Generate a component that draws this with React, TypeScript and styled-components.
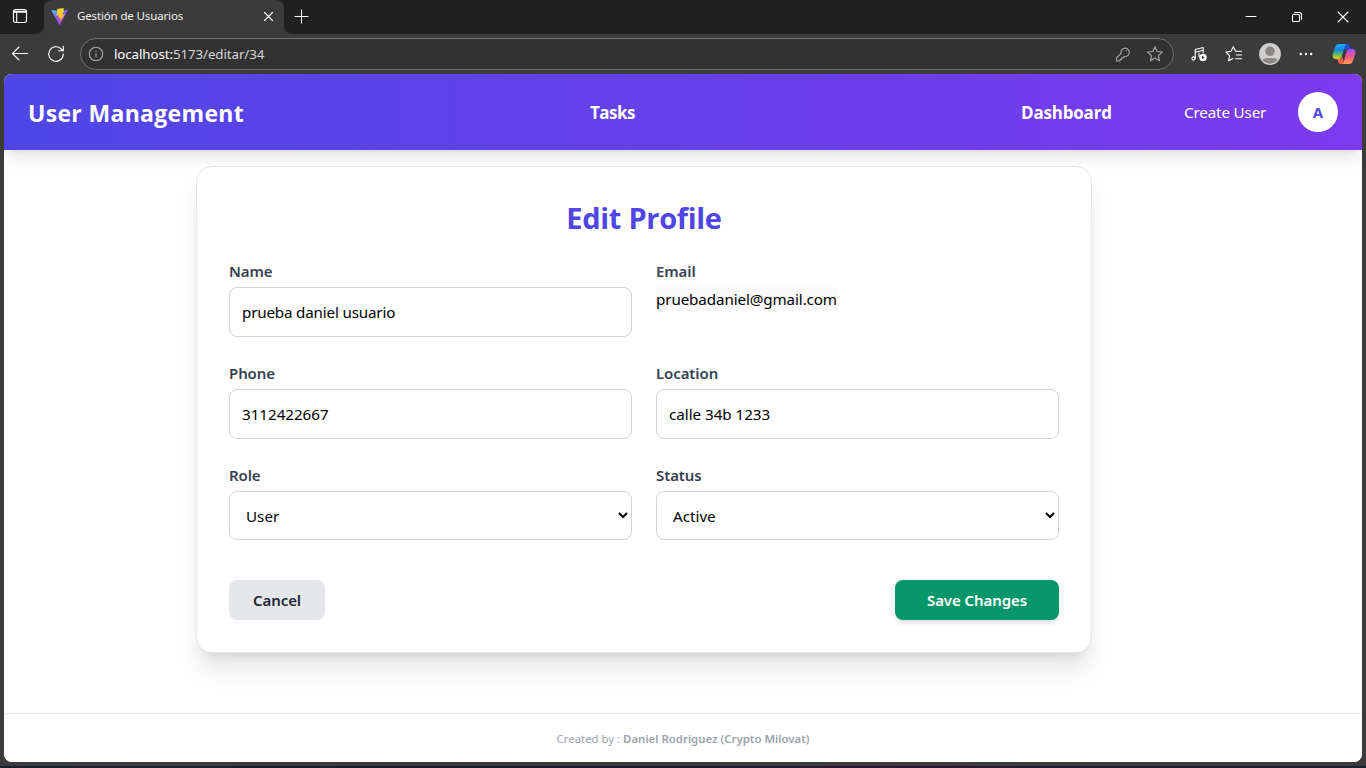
import React from "react";
import styled, { createGlobalStyle } from "styled-components";

const GlobalStyle = createGlobalStyle`
  *, *::before, *::after { box-sizing: border-box; }
  body { margin: 0; font-family: "Noto Sans", "Open Sans", sans-serif; background: #3b3b3b; }
  h1, h2, p { margin: 0; }
`;

const Window = styled.div`
  width: 1366px;
  height: 768px;
  display: flex;
  flex-direction: column;
  overflow: hidden;
  background: #3b3b3b;
`;

/* Browser chrome */
const TabStrip = styled.div`
  display: flex;
  flex: 0 0 34px;
  color: #fff;
`;
const StripStart = styled.div`
  display: flex;
  align-items: center;
  width: 44px;
  padding: 0 0 2px 12px;
  background: #202020;
  border-bottom-right-radius: 8px;
`;
const TabSlot = styled.div`
  display: flex;
  width: 240px;
  background: linear-gradient(#202020 50%, #3b3b3b 50%);
`;
const Tab = styled.div`
  display: flex;
  align-items: center;
  flex: 1;
  padding: 0 10px 2px 7px;
  background: #3b3b3b;
  border-radius: 8px 8px 0 0;
`;
const TabTitle = styled.span`
  flex: 1;
  margin-left: 9px;
  font-size: 11.5px;
  line-height: 16px;
  letter-spacing: -0.14px;
  color: #f2f2f2;
`;
const StripEnd = styled.div`
  display: flex;
  align-items: center;
  justify-content: space-between;
  flex: 1;
  padding: 0 17px 2px 10px;
  background: #202020;
  border-bottom-left-radius: 8px;
`;
const WindowControls = styled.div`
  display: flex;
  align-items: center;
  gap: 34px;
  padding-top: 2px;
`;
const Toolbar = styled.div`
  display: flex;
  align-items: center;
  flex: 0 0 40px;
  padding: 0 8px 0 10px;
  color: #fff;
`;
const NavIcons = styled.div`
  display: flex;
  align-items: center;
  gap: 16px;
  width: 70px;
`;
const AddressBar = styled.div`
  display: flex;
  align-items: center;
  flex: none;
  width: 1094px;
  height: 32px;
  padding: 0 9px 0 7px;
  border: 1px solid #6d6d6d;
  border-radius: 16px;
  background: #323232;
  color: #a8a8a8;
`;
const Url = styled.span`
  flex: 1;
  margin-left: 10px;
  font-size: 13.3px;
  letter-spacing: -0.08px;
  line-height: 20px;
  color: #d6d6d6;
`;
const Host = styled.span`
  color: #fff;
`;
const AddressIcons = styled.div`
  display: flex;
  align-items: center;
  gap: 13px;
`;
const ToolbarIcons = styled.div`
  display: grid;
  grid-template-columns: 22px 48px 24px 48px 28px;
  align-items: center;
  justify-items: center;
  margin-left: 14px;
`;
const Icon = styled.svg`
  display: block;
  flex: none;
  fill: none;
  stroke: currentColor;
  stroke-width: 1.1;
  stroke-linecap: round;
  stroke-linejoin: round;
`;

/* Page */
const Page = styled.div`
  display: flex;
  flex-direction: column;
  width: 1358px;
  height: 688px;
  margin-left: 4px;
  border-radius: 8px;
  overflow: hidden;
  background: #fefefe;
`;
const Header = styled.header`
  display: flex;
  align-items: center;
  flex: 0 0 76px;
  padding: 0 24px;
  color: #fff;
  white-space: nowrap;
  background: linear-gradient(to right, #4f46e5, #7c3aed);
  box-shadow: 0 10px 15px -3px rgba(0, 0, 0, 0.1), 0 4px 6px -4px rgba(0, 0, 0, 0.1);
`;
const Brand = styled.h1`
  width: 562px;
  padding-top: 2px;
  font-family: "Open Sans", sans-serif;
  font-size: 23px;
  line-height: 32px;
  font-weight: 700;
  letter-spacing: 0.32px;
`;
const NavLink = styled.a<{ $width: number; $tracking: number }>`
  width: ${(p) => p.$width}px;
  padding-top: 2px;
  font-family: "Open Sans", sans-serif;
  font-size: 17px;
  line-height: 28px;
  font-weight: 700;
  letter-spacing: ${(p) => p.$tracking}px;
`;
const CreateLink = styled.a`
  width: 114px;
  font-size: 15.2px;
  line-height: 24px;
  letter-spacing: -0.15px;
`;
const Avatar = styled.div`
  display: grid;
  place-items: center;
  width: 40px;
  height: 40px;
  border-radius: 50%;
  background: #fff;
  color: #4f46e5;
  font-size: 15px;
  font-weight: 700;
`;
const Main = styled.main`
  flex: 1;
  padding: 16px 0 0 192px;
`;
const Card = styled.section`
  width: 896px;
  height: 487px;
  padding: 32px;
  border: 1px solid #e5e7eb;
  border-radius: 16px;
  background: #fff;
  box-shadow: 0 20px 25px -5px rgba(0, 0, 0, 0.1), 0 8px 10px -6px rgba(0, 0, 0, 0.1);
`;
const Title = styled.h2`
  margin-bottom: 24px;
  font-family: "Open Sans", sans-serif;
  font-size: 29px;
  line-height: 37px;
  height: 36px;
  letter-spacing: -0.3px;
  text-align: center;
  color: #4f46e5;
`;
const FormGrid = styled.div`
  display: grid;
  grid-template-columns: 1fr 1fr;
  gap: 24px;
`;
const Field = styled.div`
  display: flex;
  flex-direction: column;
  align-items: stretch;
`;
const Label = styled.label`
  margin-bottom: 4px;
  font-size: 15px;
  line-height: 24px;
  font-weight: 600;
  letter-spacing: -0.1px;
  color: #374151;
`;
const Input = styled.input`
  height: 50px;
  padding: 12px;
  border: 1px solid #d1d5db;
  border-radius: 8px;
  background: #fff;
  color: #000;
  font: 15.2px/24px "Noto Sans", sans-serif;
  letter-spacing: ${(p) => (p.name === "name" ? "-0.18px" : "-0.03px")};
`;
const Select = styled.select`
  height: 49px;
  padding: 12px;
  border: 1px solid #d1d5db;
  border-radius: 8px;
  background: #fff;
  color: #000;
  font: 15.2px/24px "Noto Sans", sans-serif;
`;
const Email = styled.p`
  align-self: flex-start;
  height: 24px;
  background: #fafafa;
  color: #000;
  font-size: 15.2px;
  line-height: 24px;
  letter-spacing: -0.11px;
`;
const Actions = styled.div`
  display: flex;
  justify-content: space-between;
  margin-top: 40px;
`;
const Button = styled.button<{ $primary?: boolean }>`
  width: ${(p) => (p.$primary ? 164 : 96)}px;
  height: 40px;
  padding: 0;
  border: 0;
  border-radius: 8px;
  background: ${(p) => (p.$primary ? "#059669" : "#e5e7eb")};
  color: ${(p) => (p.$primary ? "#fff" : "#1f2937")};
  box-shadow: ${(p) => (p.$primary ? "0 4px 6px -1px rgba(0,0,0,.1), 0 2px 4px -2px rgba(0,0,0,.1)" : "none")};
  font: 600 15px/24px "Noto Sans", sans-serif;
  letter-spacing: -0.08px;
`;
const Footer = styled.footer`
  flex: 0 0 49px;
  padding-top: 17px;
  border-top: 1px solid #e5e7eb;
  background: #fff;
  color: #9ca3af;
  font-size: 11.4px;
  line-height: 16px;
  text-align: center;
`;
const Author = styled.span`
  font-weight: 600;
`;
const Desktop = styled.div`
  height: 2px;
  margin-top: 4px;
  background: linear-gradient(to right, #1c2228, #1b1c33 45%, #2a1b38 65%, #1c2030);
`;

const TabActionsIcon = () => (
  <Icon width="16" height="16" viewBox="0 0 16 16">
    <rect x="1.5" y="1.5" width="13" height="13" rx="2.5" />
    <path d="M2 3.2h12M2 4.3h12M4.7 5v9" />
  </Icon>
);

const ViteLogo = () => (
  <svg width="17" height="17" viewBox="0 0 34 34">
    <defs>
      <linearGradient id="vt" x1="0" y1="0" x2="0.6" y2="1">
        <stop offset="0" stopColor="#41d1ff" />
        <stop offset="0.5" stopColor="#8a5cff" />
        <stop offset="1" stopColor="#bd34fe" />
      </linearGradient>
      <linearGradient id="vb" x1="0" y1="0" x2="0" y2="1">
        <stop offset="0" stopColor="#ffdd35" />
        <stop offset="1" stopColor="#ffa800" />
      </linearGradient>
    </defs>
    <path d="M1 5.5 16 33c.5 1 1.5 1 2 0L33 5.5c.5-1-.3-2-1.5-1.7L17 6.5 2.5 3.8C1.3 3.6.5 4.5 1 5.5Z" fill="url(#vt)" />
    <path d="M25 0 12.5 2.2 11.3 16l4.7-.8L14.5 21l4.5-1-2 9L27.5 13l-4.8.8L25.5 7Z" fill="url(#vb)" />
  </svg>
);

const CopilotLogo = () => (
  <svg width="24" height="22" viewBox="0 0 24 22">
    <defs>
      <linearGradient id="ca" x1="0" y1="0" x2="0" y2="1">
        <stop offset="0" stopColor="#20a9f5" />
        <stop offset="0.4" stopColor="#1688e0" />
        <stop offset="0.68" stopColor="#55b86a" />
        <stop offset="1" stopColor="#f0d000" />
      </linearGradient>
      <linearGradient id="cb" x1="0" y1="0" x2="0" y2="1">
        <stop offset="0" stopColor="#a54cff" />
        <stop offset="0.5" stopColor="#f0588e" />
        <stop offset="1" stopColor="#ffa04a" />
      </linearGradient>
    </defs>
    <path d="M12 1h3c1.5 0 2.3.8 2.8 2.2L18.8 6H15c-1.5 0-2.2.8-2.6 2.2Z" fill="#1b54d8" />
    <path d="M7 1h8c-1.5.3-2 1.2-2.4 2.5l-2.7 9.8C9.4 15 8.5 16 6.8 16H4c-3 0-4-2.2-3.2-5L3 4.2C3.7 2 5 1 7 1Z" fill="url(#ca)" />
    <path d="M12 21H9c-1.5 0-2.3-.8-2.8-2.2L5.3 16H8c1.5 0 2.3-.7 2.7-2.1Z" fill="#f5604a" />
    <path d="M17 21H9.5c1.5-.3 2-1.2 2.4-2.5l2.7-9.8C15 7 16 6 17.7 6H20c3 0 4 2.2 3.2 5L21 17.8C20.3 20 19 21 17 21Z" fill="url(#cb)" />
  </svg>
);

const STAR = "m9 1.7 2.15 4.75 5.15.6-3.8 3.5 1 5.1L9 13.1l-4.5 2.55 1-5.1L1.7 7.05l5.15-.6Z";

function BrowserChrome() {
  return (
    <>
      <TabStrip>
        <StripStart><TabActionsIcon /></StripStart>
        <TabSlot>
          <Tab>
            <ViteLogo />
            <TabTitle>Gestión de Usuarios</TabTitle>
            <Icon width="11" height="11" viewBox="0 0 11 11"><path d="m1.5 1.5 8 8m0-8-8 8" /></Icon>
          </Tab>
        </TabSlot>
        <StripEnd>
          <Icon width="15" height="15" viewBox="0 0 15 15"><path d="M7.5 1v13M1 7.5h13" /></Icon>
          <WindowControls>
            <Icon width="12" height="12" viewBox="0 0 12 12"><path d="M1 5.5h10" /></Icon>
            <Icon width="12" height="12" viewBox="0 0 12 12">
              <rect x="1.5" y="3.5" width="7" height="7" rx="1" />
              <path d="M3.5 1.5h5a2 2 0 0 1 2 2v5" />
            </Icon>
            <Icon width="12" height="12" viewBox="0 0 12 12"><path d="m1 1 10 10M11 1 1 11" /></Icon>
          </WindowControls>
        </StripEnd>
      </TabStrip>
      <Toolbar>
        <NavIcons>
          <Icon width="20" height="20" viewBox="0 0 20 20"><path d="M17.5 9.500H2.500m6.500-6.500-6.500 6.500L9 16" /></Icon>
          <Icon width="20" height="20" viewBox="0 0 20 20"><path d="M17.3 10a7.3 7.3 0 1 1-2.2-5.2L17 6.6M17.3 2.2v4.6h-4.6" /></Icon>
        </NavIcons>
        <AddressBar>
          <Icon width="16" height="16" viewBox="0 0 16 16">
            <circle cx="8" cy="8" r="6.7" />
            <path d="M8 7.3v3.7M8 5v.1" />
          </Icon>
          <Url><Host>localhost:</Host>5173/editar/34</Url>
          <AddressIcons>
            <Icon width="20" height="20" viewBox="0 0 20 20">
              <path d="M8 9.3a4.2 4.2 0 1 1 3.4 3.2L9.8 14H8.5v1.5H7V17H3.5v-3Z" />
              <path d="M13.2 6.5v.1" />
            </Icon>
            <Icon width="18" height="18" viewBox="0 0 18 18"><path d={STAR} /></Icon>
          </AddressIcons>
        </AddressBar>
        <ToolbarIcons>
          <Icon width="22" height="20" viewBox="0 0 22 20">
            <circle cx="5.5" cy="14.5" r="1.6" />
            <path d="M7.2 14.5V5.5l8-2v5M7.2 8.3l8-2M11 12.5V9" />
            <circle cx="15" cy="13.5" r="3.7" fill="#fff" stroke="none" />
            <path d="m14 11.8 2.7 1.7-2.7 1.7Z" fill="#3b3b3b" stroke="none" />
          </Icon>
          <Icon width="18" height="18" viewBox="0 0 18 18">
            <path d="M10.6 6.3 8.3 1.7 6 6.3 1 7.1l3.6 3.5L3.7 15.8l4.1-2.2M10.6 6.3H16.5M11.5 10h5M10.5 13.7h6" />
          </Icon>
          <svg width="22" height="22" viewBox="0 0 23 23">
            <circle cx="11.5" cy="11.5" r="11.4" fill="#d2d0ce" />
            <circle cx="11.5" cy="8.7" r="5" fill="#8a8886" />
            <path d="M3.3 17.3c1.7-2.2 14.7-2.2 16.4 0a10 10 0 0 1-16.4 0Z" fill="#8a8886" />
          </svg>
          <svg width="14" height="4" viewBox="0 0 14 4" fill="#fff">
            <circle cx="1.8" cy="2" r="1.2" /><circle cx="7" cy="2" r="1.2" /><circle cx="12.2" cy="2" r="1.2" />
          </svg>
          <CopilotLogo />
        </ToolbarIcons>
      </Toolbar>
    </>
  );
}

export default function App() {
  return (
    <Window>
      <GlobalStyle />
      <BrowserChrome />
      <Page>
        <Header>
          <Brand>User Management</Brand>
          <NavLink $width={431} $tracking={-0.5}>Tasks</NavLink>
          <NavLink $width={163} $tracking={-0.2}>Dashboard</NavLink>
          <CreateLink>Create User</CreateLink>
          <Avatar>A</Avatar>
        </Header>
        <Main>
          <Card>
            <Title>Edit Profile</Title>
            <FormGrid>
              <Field><Label>Name</Label><Input type="text" name="name" defaultValue="prueba daniel usuario" /></Field>
              <Field><Label>Email</Label><Email>pruebadaniel@gmail.com</Email></Field>
              <Field><Label>Phone</Label><Input type="tel" name="phone" defaultValue="3112422667" /></Field>
              <Field><Label>Location</Label><Input type="text" name="location" defaultValue="calle 34b 1233" /></Field>
              <Field><Label>Role</Label><Select defaultValue="User"><option>User</option><option>Admin</option></Select></Field>
              <Field><Label>Status</Label><Select defaultValue="Active"><option>Active</option><option>Inactive</option></Select></Field>
            </FormGrid>
            <Actions>
              <Button>Cancel</Button>
              <Button $primary>Save Changes</Button>
            </Actions>
          </Card>
        </Main>
        <Footer>Created by : <Author>Daniel Rodriguez (Crypto Milovat)</Author></Footer>
      </Page>
      <Desktop />
    </Window>
  );
}
